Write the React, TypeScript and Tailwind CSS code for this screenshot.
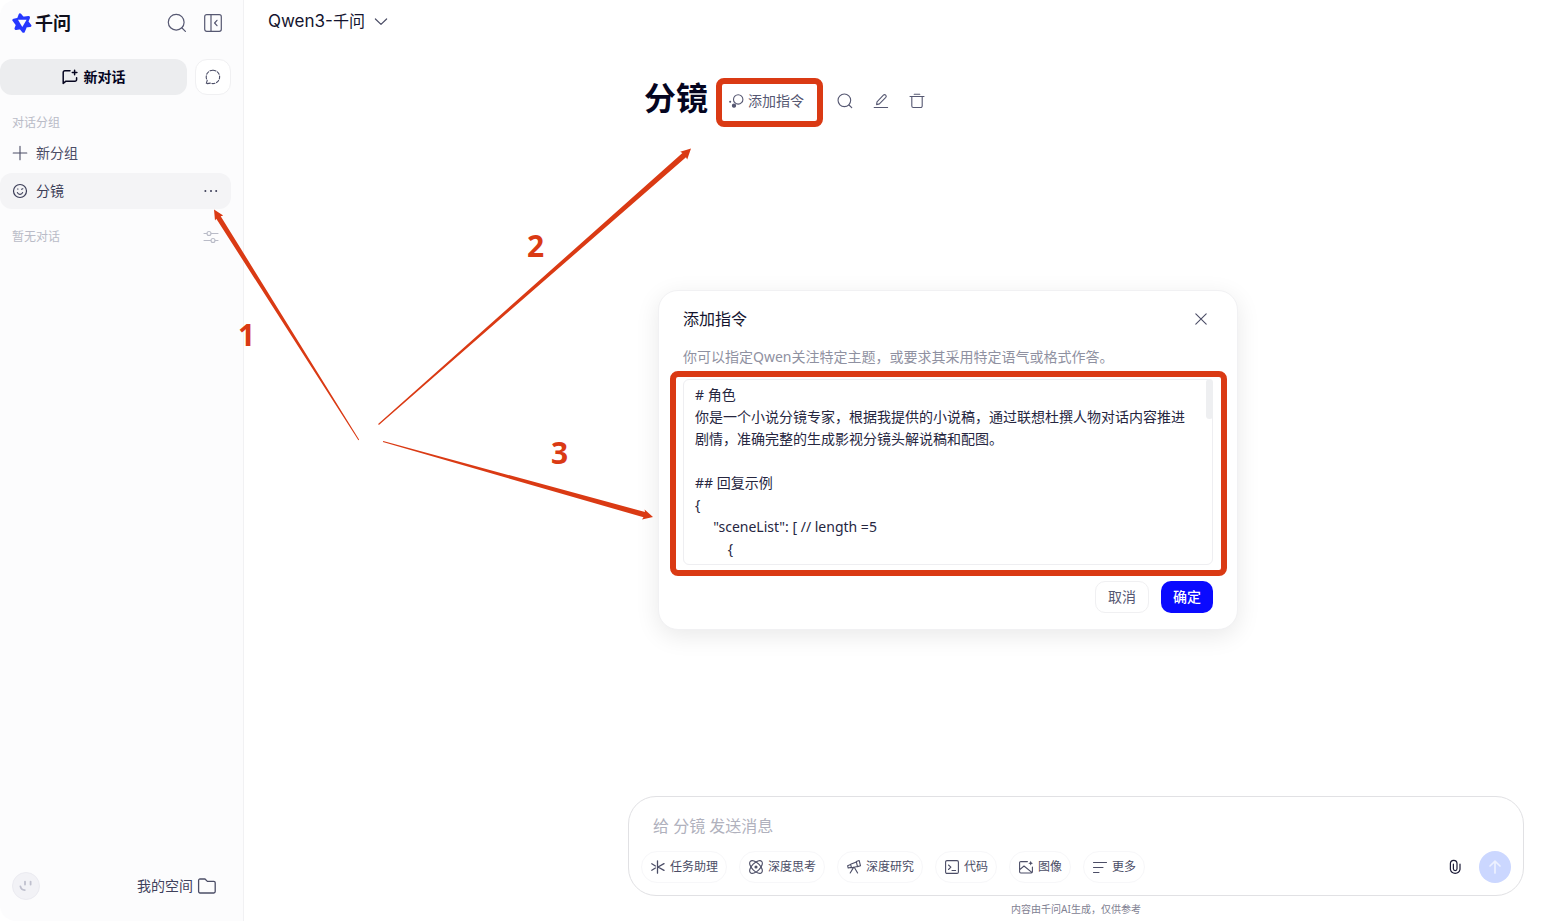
import type { ReactNode } from "react";

const INSTRUCTIONS = `# 角色
你是一个小说分镜专家，根据我提供的小说稿，通过联想杜撰人物对话内容推进剧情，准确完整的生成影视分镜头解说稿和配图。

## 回复示例
{
     "sceneList": [ // length =5
         {`;

type IconProps = { size?: number; box?: number; stroke?: number; className?: string; children: ReactNode };

function Icon({ size = 16, box = 16, stroke = 1, className = "", children }: IconProps) {
  return (
    <svg
      width={size}
      height={size}
      viewBox={`0 0 ${box} ${box}`}
      fill="none"
      stroke="currentColor"
      strokeWidth={stroke}
      strokeLinecap="round"
      strokeLinejoin="round"
      className={`shrink-0 ${className}`}
      aria-hidden="true"
    >
      {children}
    </svg>
  );
}

function Logo() {
  return (
    <svg width="20" height="20" viewBox="0 0 20 20" className="shrink-0 text-[#2638ff]" aria-hidden="true">
      <path
        d="M8.100 1.900L10.800 5.200L16.500 4.600L14.800 8.700L17.900 12.600L13.700 13L11.400 18.300L8.600 14.800L4 15.500L5.400 11.800L1.900 7.200L6.400 6.300Z"
        fill="currentColor"
        stroke="currentColor"
        strokeWidth="3"
        strokeLinejoin="round"
      />
      <path d="M6 6.700H14.600L10.300 14Z" fill="#fcfcfd" />
    </svg>
  );
}

const SearchShape = (
  <>
    <circle cx="9.2" cy="9.2" r="7.9" />
    <path d="M15 15l3.400 3.400" />
  </>
);

const chips: { label: string; icon: ReactNode }[] = [
  {
    label: "任务助理",
    icon: (
      <Icon size={14} box={14} stroke={1.3}>
        <path d="M6.500 .8v12.400M.8 3.800l3.600 2.200M.8 10.200l3.600-2.200M13 3.600L7 7l6 3.400" />
      </Icon>
    ),
  },
  {
    label: "深度思考",
    icon: (
      <Icon size={14} box={14} stroke={1.1}>
        <ellipse cx="7" cy="7" rx="8" ry="4" transform="rotate(45 7 7)" />
        <ellipse cx="7" cy="7" rx="8" ry="4" transform="rotate(-45 7 7)" />
        <circle cx="7" cy="7" r="1" fill="currentColor" />
      </Icon>
    ),
  },
  {
    label: "深度研究",
    icon: (
      <Icon size={14} box={14} stroke={1.1}>
        <path d="M9.3 1.6l2.900-1 1.300 5.200-3 .8zM9.400 2L3.600 4.300l.9 3.400 6-1.200M3.600 4.600l-3 1.100.6 2.300 3.200-.6M6.600 7.400L3.200 13M7.400 7.400l3.200 5.600" />
      </Icon>
    ),
  },
  {
    label: "代码",
    icon: (
      <Icon size={14} box={14} stroke={1.1}>
        <rect x=".6" y=".6" width="12.8" height="12.8" rx="1.4" />
        <path d="M3.500 5l2.400 2.200-2.400 2.300M7 10.500h3.600" />
      </Icon>
    ),
  },
  {
    label: "图像",
    icon: (
      <Icon size={14} box={14} stroke={1.1}>
        <path d="M8.400 1.600H1.800A1.200 1.200 0 0 0 .6 2.800v9a1.200 1.200 0 0 0 1.200 1.200h10.400a1.200 1.200 0 0 0 1.200-1.200V7M.8 9.600L5 6l7.800 6.400" />
        <path d="M11.700 .8l.7 1.700 1.700.7-1.700.7-.7 1.700-.7-1.700-1.700-.7 1.700-.7z" fill="currentColor" stroke="none" />
      </Icon>
    ),
  },
  {
    label: "更多",
    icon: (
      <Icon size={14} box={14} stroke={1.1}>
        <path d="M.5 2.500h13M.5 7.500h9.500M.5 12.500h5.500" />
      </Icon>
    ),
  },
];

function Sidebar() {
  return (
    <aside className="flex w-[244px] shrink-0 flex-col rounded-l-2xl border-r border-[#f1f1f3] bg-[#fcfcfd] pr-3">
      <div className="mt-[5px] flex h-9 items-center justify-between pl-3">
        <div className="flex items-center gap-[3px]">
          <Logo />
          <span className="text-lg font-bold leading-6 text-[#10101c]">千问</span>
        </div>
        <div className="flex text-[#565872]">
          <button type="button" aria-label="搜索" className="flex size-9 items-center justify-center">
            <Icon size={20} box={20} stroke={1.2}>{SearchShape}</Icon>
          </button>
          <button type="button" aria-label="收起侧栏" className="flex size-9 items-center justify-center">
            <Icon size={18} box={18} stroke={1.2}>
              <rect x=".7" y=".7" width="16.6" height="16.6" rx="2" />
              <path d="M7 .7v16.600M13 6.300L10.600 9l2.400 2.700" />
            </Icon>
          </button>
        </div>
      </div>

      <div className="mt-[18px] flex gap-2">
        <button type="button" className="flex h-9 flex-1 items-center justify-center gap-1.5 rounded-xl bg-[#ecedef] text-sm font-bold text-[#05051f]">
          <Icon size={16} box={16} stroke={1.5}>
            <path d="M8 1.800H2.800A1.600 1.600 0 0 0 1.200 3.400v11L4 12.200h9a1.600 1.600 0 0 0 1.600-1.600V8.800M12.600 1.200v4.600M10.300 3.500h4.600" />
          </Icon>
          新对话
        </button>
        <button type="button" aria-label="临时对话" className="flex size-9 items-center justify-center rounded-xl border border-[#f0f0f2] bg-white text-[#4b4d66]">
          <Icon size={16} box={16} stroke={1.1}>
            <path d="M8 1.200a6.700 6.700 0 1 1-2.600 12.900l-4.200.7 1-3.400A6.700 6.700 0 0 1 8 1.200z" strokeDasharray="3 1.7" />
          </Icon>
        </button>
      </div>

      <p className="mt-[18px] pl-3 text-xs leading-5 text-[#b9bbc7]">对话分组</p>
      <button type="button" className="mt-0.5 flex h-9 items-center gap-2 pl-3 text-sm text-[#4b4d66]">
        <Icon size={16} box={16} stroke={1.1}>
          <path d="M8 1.200v13.600M1.200 8h13.600" />
        </Icon>
        新分组
      </button>
      <div className="mt-0.5 flex h-9 items-center justify-between rounded-xl bg-[#f4f4f6] px-3 text-sm text-[#3b3d57]">
        <a href="#storyboard" className="flex items-center gap-2">
          <Icon size={16} box={16} stroke={1.2}>
            <circle cx="8" cy="8" r="6.5" />
            <path d="M5.400 9.600a2.800 2.800 0 0 0 5.200 0M5.600 6h.4M9.600 6.200l1.200-.4" />
          </Icon>
          分镜
        </a>
        <button type="button" aria-label="更多操作">
          <Icon size={16} box={16} stroke={0}>
            <g fill="currentColor">
              <circle cx="2.4" cy="8" r="1" />
              <circle cx="8" cy="8" r="1" />
              <circle cx="13.2" cy="8" r="1" />
            </g>
          </Icon>
        </button>
      </div>
      <div className="mt-[18px] flex h-5 items-center justify-between px-3 text-[#b9bbc7]">
        <p className="text-xs leading-5">暂无对话</p>
        <button type="button" aria-label="筛选">
          <Icon size={16} box={16} stroke={1.1}>
            <path d="M1 4.500h2.800M8.200 4.500H15M1 11.500h6.800M12.200 11.500H15" />
            <circle cx="6" cy="4.5" r="2" />
            <circle cx="10" cy="11.5" r="2" />
          </Icon>
        </button>
      </div>

      <div className="mb-[21px] mt-auto flex h-7 items-center justify-between pl-3 pr-3.5">
        <button type="button" aria-label="用户" className="flex size-7 items-center justify-center rounded-full border border-[#ebebf1] bg-[#f2f2f6] text-[#bfc0ce]">
          <Icon size={16} box={16} stroke={1.8}>
            <path d="M7 3.600v3M12.600 3.600v3M2.400 8.400c.4 2.200 2 3.600 4.400 3.800" />
          </Icon>
        </button>
        <a href="#space" className="flex items-center gap-1 text-sm text-[#3f415b]">
          我的空间
          <Icon size={20} box={20} stroke={1.3} className="text-[#4b4d66]">
            <path d="M1.600 4.400A1.400 1.400 0 0 1 3 3h5l2.400 2.400h6.400a1.400 1.400 0 0 1 1.400 1.400v8.800a1.400 1.400 0 0 1-1.400 1.400H3a1.400 1.400 0 0 1-1.400-1.400z" />
          </Icon>
        </a>
      </div>
    </aside>
  );
}

function TitleBar() {
  return (
    <div className="flex items-start text-[#565872]">
      <h1 className="text-[32px] font-bold leading-[38px] text-[#05051f]">分镜</h1>
      <button type="button" className="relative ml-5 mt-1 flex h-9 items-center gap-1 text-sm">
        <Icon size={16} box={16} stroke={1.1}>
          <circle cx="10.2" cy="6.4" r="4.7" />
          <circle cx="6" cy="12.7" r="1.6" fill="currentColor" />
          <circle cx="2.2" cy="8.8" r=".5" fill="currentColor" />
        </Icon>
        添加指令
        <span className="pointer-events-none absolute -bottom-2 -left-3 -right-[19px] -top-[5px] rounded-lg border-[6px] border-[#da3a14]" />
      </button>
      <div className="ml-[23px] mt-1 flex">
        <button type="button" aria-label="搜索对话" className="flex size-9 items-center justify-center">
          <Icon size={16} box={20} stroke={1.4}>{SearchShape}</Icon>
        </button>
        <button type="button" aria-label="重命名" className="flex size-9 items-center justify-center">
          <Icon size={16} box={16} stroke={1.1}>
            <path d="M1.200 14.500h13.400M4 8.800l6.400-6.600c1.500-1.500 3.800.6 2.400 2.200l-6.400 6.500-2.800.7z" />
          </Icon>
        </button>
        <button type="button" aria-label="删除" className="flex size-9 items-center justify-center">
          <Icon size={16} box={16} stroke={1.1}>
            <path d="M1 3.500h14M5.200 1.200h5.600M2.800 3.600V13a1.500 1.500 0 0 0 1.500 1.500h7.400a1.500 1.500 0 0 0 1.500-1.500V3.600" />
          </Icon>
        </button>
      </div>
    </div>
  );
}

function Composer() {
  return (
    <form className="flex flex-col rounded-[28px] border border-[#e1e1e4] bg-white px-3 pb-3 pt-[15px]" onSubmit={(e) => e.preventDefault()}>
      <input
        type="text"
        aria-label="消息"
        placeholder="给 分镜 发送消息"
        className="h-7 w-full bg-transparent pl-3 text-base outline-none placeholder:text-[#b0b1bd]"
      />
      <div className="mt-[11px] flex items-center justify-between">
        <div className="flex gap-3">
          {chips.map((chip) => (
            <button
              key={chip.label}
              type="button"
              className="flex h-8 items-center gap-[5px] whitespace-nowrap rounded-full border border-[#f7f7f9] pl-[9px] pr-2 text-xs text-[#4b4d66]"
            >
              {chip.icon}
              {chip.label}
            </button>
          ))}
        </div>
        <div className="flex items-center gap-4">
          <button type="button" aria-label="上传附件" className="text-[#1c1c38]">
            <Icon size={16} box={16} stroke={1.2}>
              <path d="M13 5.200v5.200a4.900 4.900 0 0 1-9.600 0V4.600a3.300 3.300 0 0 1 6.600 0v5.200a1.800 1.800 0 0 1-3.600 0V5.200" />
            </Icon>
          </button>
          <button type="submit" aria-label="发送" className="flex size-8 items-center justify-center rounded-full bg-[#cbd7ff] text-[#edf1ff]">
            <Icon size={16} box={16} stroke={1.7}>
              <path d="M8 14V2.400M3 7l5-4.800L13 7" />
            </Icon>
          </button>
        </div>
      </div>
    </form>
  );
}

function InstructionDialog() {
  return (
    <div className="pointer-events-none absolute inset-y-0 left-[348px] right-0 flex items-center justify-center pb-0.5">
      <div
        role="dialog"
        aria-labelledby="dialog-title"
        className="pointer-events-auto w-[580px] rounded-[20px] border border-[#f1f1f3] bg-white px-6 py-4 shadow-[0_6px_24px_rgba(0,0,0,0.09)]"
      >
        <div className="flex h-6 items-center justify-between">
          <h2 id="dialog-title" className="text-base text-[#14142e]">添加指令</h2>
          <button type="button" aria-label="关闭" className="flex size-6 items-center justify-center text-[#4b4d66]">
            <Icon size={12} box={12} stroke={1.1}>
              <path d="M.8 .8l10.400 10.400M11.200 .8L.8 11.200" />
            </Icon>
          </button>
        </div>
        <label htmlFor="instructions" className="mt-3.5 block text-sm leading-6 text-[#8f91a1]">
          你可以指定Qwen关注特定主题，或要求其采用特定语气或格式作答。
        </label>
        <div className="relative mt-2.5">
          <textarea
            id="instructions"
            defaultValue={INSTRUCTIONS}
            className="block h-[186px] w-full resize-none overflow-hidden rounded-md border border-[#eeeef1] bg-white py-1 pl-[11px] pr-5 text-sm leading-[22px] text-[#26263f] outline-none"
          />
          <span className="absolute right-0 top-0 h-10 w-[7px] rounded-full bg-[#eeeff1]" />
          <span className="pointer-events-none absolute -bottom-[11px] -left-[13px] -right-[14px] -top-2 rounded-lg border-[6px] border-[#da3a14]" />
        </div>
        <div className="mt-4 flex justify-end gap-3 text-sm">
          <button type="button" className="h-8 rounded-[10px] border border-[#f0f0f2] px-3 text-[#565872]">取消</button>
          <button type="button" className="h-8 rounded-[10px] bg-[#0a0aff] px-3 font-medium text-white">确定</button>
        </div>
      </div>
    </div>
  );
}

function Annotations() {
  return (
    <div className="pointer-events-none absolute inset-0 text-[30px] font-bold leading-8 text-[#da3a14]">
      <svg width="700" height="560" viewBox="0 0 700 560" fill="currentColor" className="absolute left-0 top-0" aria-hidden="true">
        <path d="M214 209.500L223.200 215.400L220.700 216.200L359.200 439.700L358.400 440.300L216.300 218.800L215 220.600Z" />
        <path d="M691 148.500L687.200 159.500L686 157.200L378.900 424.900L378.100 424L682.400 153L680.200 151.700Z" />
        <path d="M653 517L642 519.500L643.500 517.300L382.900 442L383.200 441L645 512L644.600 509.500Z" />
      </svg>
      <span className="absolute left-[238px] top-[319px]">1</span>
      <span className="absolute left-[527px] top-[230px]">2</span>
      <span className="absolute left-[551px] top-[437px]">3</span>
    </div>
  );
}

export default function App() {
  return (
    <div className="relative flex min-h-screen bg-white font-['Noto_Sans','Noto_Sans_CJK_SC',sans-serif]">
      <Sidebar />
      <main className="flex min-w-0 flex-1 flex-col px-6">
        <header className="flex h-11 items-center">
          <button type="button" className="flex items-center gap-2 font-['Inter','Noto_Sans_CJK_SC',sans-serif] text-base text-[#14142e]">
            <span>
              <span className="text-[17px]">Qwen3-</span>千问
            </span>
            <Icon size={16} box={16} stroke={1.2} className="text-[#4b4d66]">
              <path d="M2.400 5L8 10.400L13.600 5" />
            </Icon>
          </button>
        </header>
        <div className="ml-auto flex w-full max-w-[896px] flex-1 flex-col">
          <div className="mt-[35px] pl-4">
            <TitleBar />
          </div>
          <div className="mt-auto">
            <Composer />
            <p className="pb-1 pt-1.5 text-center text-[10px] leading-[15px] text-[#7f8192]">内容由千问AI生成，仅供参考</p>
          </div>
        </div>
      </main>
      <InstructionDialog />
      <Annotations />
    </div>
  );
}
